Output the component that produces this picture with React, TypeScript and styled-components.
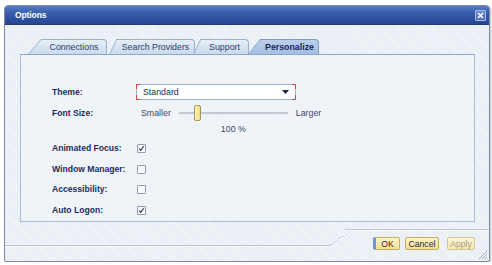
import React from "react";
import styled, { createGlobalStyle, css } from "styled-components";

const Global = createGlobalStyle`
  html, body { margin: 0; padding: 0; background: #ffffff; }
  body { font-family: "Liberation Sans", Arial, sans-serif; }
`;

const FONT = `"Liberation Sans", Arial, sans-serif`;
const texture = css`
  background-color: #e8eef4;
  background-image: repeating-linear-gradient(45deg, rgba(255,255,255,0.45) 0 1px, transparent 1px 3px);
`;

const Page = styled.div`
  padding: 5px 2px 0 4px;
`;

const Window = styled.div`
  width: 486px;
  height: 257px;
  box-sizing: border-box;
  border: 1px solid #7b8cab;
  border-radius: 4px 4px 2px 2px;
  display: flex;
  flex-direction: column;
  overflow: hidden;
  box-shadow: 1px 1px 2px rgba(0,0,0,0.25);
  position: relative;
  ${texture};
`;

const TitleBar = styled.div`
  height: 18px;
  flex: none;
  display: flex;
  align-items: center;
  justify-content: space-between;
  padding: 0 3px 0 10px;
  background: linear-gradient(#5a7cc6 0%, #3b60b0 35%, #2e519f 70%, #27468f 100%);
  border-bottom: 1px solid #1f3b7c;
`;

const Title = styled.span`
  font-family: ${FONT};
  font-weight: bold;
  font-size: 8.5px;
  color: #ffffff;
  letter-spacing: -0.1px;
`;

const CloseBox = styled.div`
  width: 11px;
  height: 11px;
  box-sizing: border-box;
  border: 1px solid #a8bde6;
  border-radius: 1px;
  background: linear-gradient(#6c8cd0, #4a6cb8);
  display: flex;
  align-items: center;
  justify-content: center;
`;

const Content = styled.div`
  padding: 14px 14px 0 15px;
  display: flex;
  flex-direction: column;
`;

const TabStrip = styled.div`
  height: 15px;
  display: flex;
  align-items: flex-end;
  position: relative;
  z-index: 2;
`;

type TabProps = { $slant: number; $w: number; $ml: number; $active?: boolean };

const Tab = styled.div<TabProps>`
  position: relative;
  z-index: ${(p) => (p.$active ? 3 : 1)};
  width: ${(p) => p.$w}px;
  margin-left: ${(p) => p.$ml}px;
  height: 15px;
  box-sizing: border-box;
  border-top: 1px solid ${(p) => (p.$active ? "#7d9dcb" : "#98b1d3")};
  border-right: 1px solid ${(p) => (p.$active ? "#7d9dcb" : "#98b1d3")};
  border-top-right-radius: 4px;
  background: ${(p) =>
    p.$active ? "linear-gradient(#bcd0eb, #a4bee2)" : "linear-gradient(#e6eef7, #cad9ec)"};
  display: flex;
  align-items: center;
  justify-content: center;
  font-family: ${FONT};
  font-size: 8.8px;
  font-weight: ${(p) => (p.$active ? "bold" : "normal")};
  color: ${(p) => (p.$active ? "#17285a" : "#2e426e")};
  white-space: nowrap;
  &::before {
    content: "";
    position: absolute;
    top: -1px;
    bottom: 0;
    left: -${(p) => p.$slant}px;
    width: ${(p) => p.$slant + 5}px;
    box-sizing: border-box;
    background: ${(p) =>
      p.$active ? "linear-gradient(#bcd0eb, #a4bee2)" : "linear-gradient(#e6eef7, #cad9ec)"};
    border-left: 1px solid ${(p) => (p.$active ? "#7d9dcb" : "#98b1d3")};
    border-top: 1px solid ${(p) => (p.$active ? "#7d9dcb" : "#98b1d3")};
    transform-origin: bottom left;
    transform: skewX(${(p) => -(Math.atan(p.$slant / 16) * 180) / Math.PI}deg);
    z-index: -1;
  }
`;

const Panel = styled.div`
  height: 168px;
  box-sizing: border-box;
  border: 1px solid #a9bdd8;
  border-top-color: #89a7d0;
  background-color: #edf2f7;
  background-image: repeating-linear-gradient(45deg, rgba(255,255,255,0.4) 0 1px, transparent 1px 3px);
  padding: 29px 0 0 31px;
  display: flex;
  flex-direction: column;
`;

const Row = styled.div<{ $mt: number; $h: number }>`
  display: grid;
  grid-template-columns: 84px auto;
  justify-content: start;
  justify-items: start;
  align-items: center;
  margin-top: ${(p) => p.$mt}px;
  min-height: ${(p) => p.$h}px;
`;

const Label = styled.span<{ $top?: boolean }>`
  font-family: ${FONT};
  font-weight: bold;
  font-size: 8.6px;
  color: #1c2d5c;
  white-space: nowrap;
  ${(p) => p.$top && css`align-self: start; line-height: 16px;`}
`;

const Select = styled.div`
  position: relative;
  width: 160px;
  height: 16px;
  box-sizing: border-box;
  border: 1px solid #9fb2cc;
  background: #ffffff;
  display: flex;
  align-items: center;
  justify-content: space-between;
  padding: 0 6px 0 6px;
  font-family: ${FONT};
  font-size: 8.8px;
  color: #1a2a55;
`;

const cornerPos = {
  tl: css`top: -1px; left: -1px; border-top: 1px solid #e0473f; border-left: 1px solid #e0473f;`,
  tr: css`top: -1px; right: -1px; border-top: 1px solid #e0473f; border-right: 1px solid #e0473f;`,
  bl: css`bottom: -1px; left: -1px; border-bottom: 1px solid #e0473f; border-left: 1px solid #e0473f;`,
  br: css`bottom: -1px; right: -1px; border-bottom: 1px solid #e0473f; border-right: 1px solid #e0473f;`,
};

const Corner = styled.span<{ $at: keyof typeof cornerPos }>`
  position: absolute;
  width: 3px;
  height: 4px;
  ${(p) => cornerPos[p.$at]}
`;

const SliderGrid = styled.div`
  display: grid;
  grid-template-columns: max-content 109px max-content;
  grid-template-rows: 16px 14px;
  justify-content: start;
  column-gap: 8px;
  row-gap: 1px;
  align-items: center;
  margin-left: 5px;
`;

const SliderText = styled.span`
  font-family: ${FONT};
  font-size: 8.8px;
  color: #3a4868;
`;

const Track = styled.div`
  position: relative;
  height: 2px;
  background: #c3c9d2;
  border-bottom: 1px solid #e9edf2;
`;

const Thumb = styled.div`
  position: absolute;
  left: 15px;
  top: -7px;
  width: 7px;
  height: 16px;
  box-sizing: border-box;
  border: 1px solid #a3975a;
  border-radius: 2px;
  background: linear-gradient(90deg, #fbf3b8, #f0de7a);
`;

const Percent = styled.span`
  grid-column: 2;
  justify-self: center;
  font-family: ${FONT};
  font-size: 8.8px;
  color: #3a4868;
`;

const Check = styled.div`
  width: 9px;
  height: 9px;
  box-sizing: border-box;
  margin-left: 1px;
  border: 1px solid #8f9db2;
  border-radius: 1px;
  background: linear-gradient(#f4f6f9, #ffffff);
  display: flex;
  align-items: center;
  justify-content: center;
`;

const Footer = styled.div`
  flex: 1;
  display: flex;
  align-items: flex-end;
  position: relative;
`;

const LeftShelf = styled.div`
  flex: 1;
  height: 15px;
  border-top: 1px solid #b4c5db;
  box-shadow: inset 0 1px 0 #ffffff;
`;

const Step = styled.svg`
  flex: none;
  display: block;
`;

const ButtonShelf = styled.div`
  height: 24px;
  border-top: 1px solid #b4c5db;
  box-shadow: inset 0 1px 0 #ffffff;
  display: flex;
  align-items: flex-start;
  padding: 7px 14px 0 28px;
`;

const Button = styled.div<{ $w: number; $ml: number; $focus?: boolean; $disabled?: boolean }>`
  width: ${(p) => p.$w}px;
  height: 13px;
  margin-left: ${(p) => p.$ml}px;
  box-sizing: border-box;
  border: 1px solid ${(p) => (p.$disabled ? "#d4c894" : "#c4ae62")};
  border-radius: 2px;
  background: ${(p) =>
    p.$disabled ? "linear-gradient(#fbf5d8, #f3e7b4)" : "linear-gradient(#fcf3c8, #f1df8e)"};
  ${(p) => p.$focus && css`border-left: 3px solid #6f93d6;`}
  display: flex;
  align-items: center;
  justify-content: center;
  font-family: ${FONT};
  font-size: 8.6px;
  color: ${(p) => (p.$disabled ? "#a9a080" : "#1c2a4c")};
`;

const Grip = styled.svg`
  position: absolute;
  right: 1px;
  bottom: 1px;
`;

const CheckMark = () => (
  <svg width="7" height="7" viewBox="0 0 7 7">
    <path d="M1.2 3.6 L2.8 5.4 L5.8 1.2" fill="none" stroke="#2a2f3a" strokeWidth="1.1" />
  </svg>
);

const tabs = [
  { label: "Connections", slant: 14, w: 65, ml: 22 },
  { label: "Search Providers", slant: 8, w: 78, ml: 10 },
  { label: "Support", slant: 8, w: 48, ml: 6 },
  { label: "Personalize", slant: 13, w: 58, ml: 12, active: true },
];

const checks = [
  { label: "Animated Focus:", on: true, mt: 5 },
  { label: "Window Manager:", on: false, mt: 7 },
  { label: "Accessibility:", on: false, mt: 6 },
  { label: "Auto Logon:", on: true, mt: 7 },
];

export default function App() {
  return (
    <>
      <Global />
      <Page>
        <Window>
          <TitleBar>
            <Title>Options</Title>
            <CloseBox>
              <svg width="7" height="7" viewBox="0 0 7 7">
                <path d="M1 1 L6 6 M6 1 L1 6" stroke="#ffffff" strokeWidth="1.6" />
              </svg>
            </CloseBox>
          </TitleBar>
          <Content>
            <TabStrip>
              {tabs.map((t) => (
                <Tab key={t.label} $slant={t.slant} $w={t.w} $ml={t.ml} $active={t.active}>
                  {t.label}
                </Tab>
              ))}
            </TabStrip>
            <Panel>
              <Row $mt={0} $h={16}>
                <Label>Theme:</Label>
                <Select>
                  <span>Standard</span>
                  <svg width="7" height="4" viewBox="0 0 7 4">
                    <path d="M0 0 H7 L3.5 4 Z" fill="#1c2340" />
                  </svg>
                  <Corner $at="tl" />
                  <Corner $at="tr" />
                  <Corner $at="bl" />
                  <Corner $at="br" />
                </Select>
              </Row>
              <Row $mt={5} $h={31}>
                <Label $top>Font Size:</Label>
                <SliderGrid>
                  <SliderText>Smaller</SliderText>
                  <Track>
                    <Thumb />
                  </Track>
                  <SliderText>Larger</SliderText>
                  <Percent>100 %</Percent>
                </SliderGrid>
              </Row>
              {checks.map((c) => (
                <Row key={c.label} $mt={c.mt} $h={14}>
                  <Label>{c.label}</Label>
                  <Check>{c.on && <CheckMark />}</Check>
                </Row>
              ))}
            </Panel>
          </Content>
          <Footer>
            <LeftShelf />
            <Step width="16" height="25" viewBox="0 0 16 25">
              <path d="M0 9.5 C7 9.5 8 0.5 16 0.5" fill="none" stroke="#b4c5db" strokeWidth="1" />
              <path d="M0 10.5 C7 10.5 8 1.5 16 1.5" fill="none" stroke="#ffffff" strokeWidth="1" />
            </Step>
            <ButtonShelf>
              <Button $w={27} $ml={0} $focus>OK</Button>
              <Button $w={34} $ml={5}>Cancel</Button>
              <Button $w={28} $ml={8} $disabled>Apply</Button>
            </ButtonShelf>
            <Grip width="11" height="11" viewBox="0 0 11 11">
              <path d="M10 2 L2 10 M10 5 L5 10 M10 8 L8 10" stroke="#9aa9bf" strokeWidth="1" />
            </Grip>
          </Footer>
        </Window>
      </Page>
    </>
  );
}
